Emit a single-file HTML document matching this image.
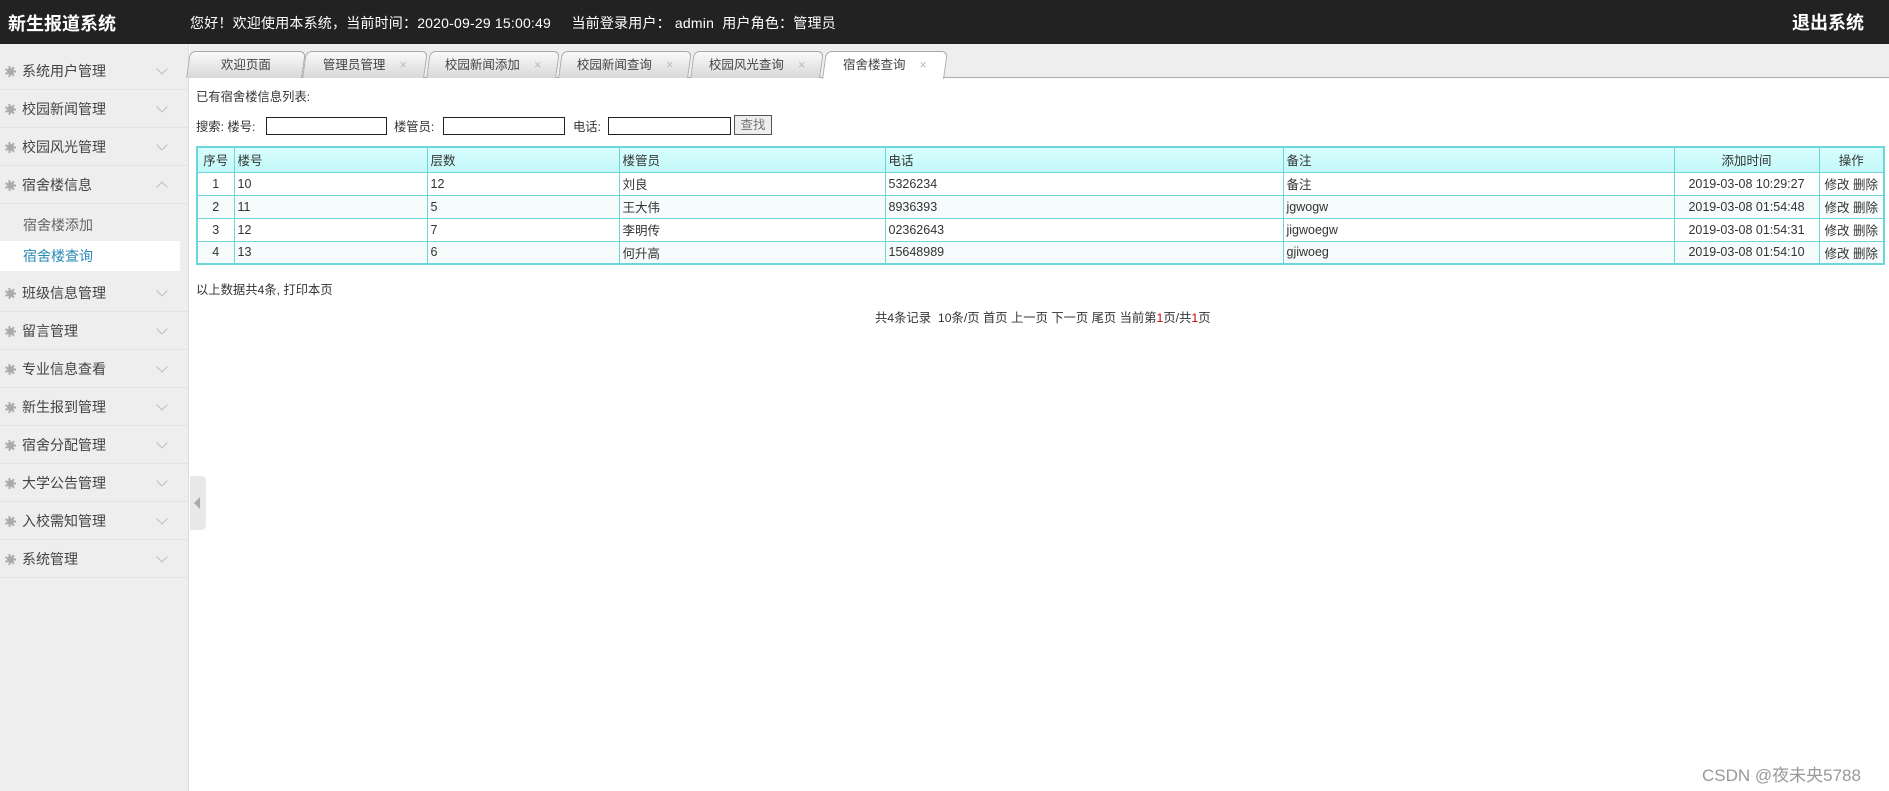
<!DOCTYPE html>
<html><head><meta charset="utf-8">
<style>
*{margin:0;padding:0;box-sizing:border-box}
body{width:1889px;height:791px;overflow:hidden;background:#fff;font-family:"Liberation Sans","Noto Sans CJK SC",sans-serif;font-size:13px;color:#333;position:relative}
.hd{position:absolute;left:0;top:0;width:1889px;height:44px;background:#222;color:#fff}
.hd .t{position:absolute;left:8px;top:10px;font-size:18px;font-weight:bold}
.hd .w{position:absolute;left:190px;top:13px;font-size:14px;letter-spacing:0.2px}
.hd .q{position:absolute;right:25px;top:9px;font-size:18px;font-weight:bold}
.sb{position:absolute;left:0;top:44px;width:189px;height:747px;background:#eee;border-right:1px solid #ddd}
.it{position:absolute;left:0;width:188px;height:38px;border-bottom:1px solid #e2e2e2;font-size:14px;color:#444;line-height:38px;padding-left:22px}
.it i{position:absolute;left:5px;top:14px;width:11px;height:11px;border-radius:50%;background:#aaa;border:2px dotted #eee}
.it b{position:absolute;right:22px;top:13px;width:8px;height:8px;border-right:1px solid #bbb;border-bottom:1px solid #bbb;transform:rotate(45deg)}
.it b.up{transform:rotate(-135deg);top:17px}
.sub{position:absolute;left:0;width:180px;height:30px;line-height:30px;padding-left:23px;font-size:14px;color:#666}
.tabs{position:absolute;left:190px;top:44px;width:1699px;height:34px;background:#eee;border-bottom:1px solid #aaa}
.tab{position:absolute;top:7px;height:27px;line-height:26px;text-align:center;font-size:12.5px;color:#444;background:linear-gradient(#fafafa,#d8d8d8);border:1px solid #aaa;border-bottom:none;border-radius:6px 6px 0 0;transform:skewX(-8deg)}
.tab span{display:inline-block;transform:skewX(8deg)}
.tab em{font-style:normal;color:#bbb;margin-left:14px}
.c{position:absolute;font-size:12.3px;color:#333;white-space:nowrap}
.inp{position:absolute;top:117px;height:18px;border:1px solid #222;background:#fff}
table{position:absolute;left:196px;top:146px;width:1689px;border-collapse:collapse;border:2px solid #6dd6da}
td{border:1px solid #6dd6da;height:23px;padding:0 3px;font-size:12.5px;white-space:nowrap}
tr.h td{background:linear-gradient(#d9fefe,#c4f8f8);height:25px}
tr:nth-child(odd):not(.h) td{background:#f6fbfb}
.ctr{text-align:center}
</style></head><body>
<div class="hd"><div class="t">新生报道系统</div><div class="w">您好！欢迎使用本系统，当前时间：2020-09-29 15:00:49 &nbsp;&nbsp;&nbsp; 当前登录用户： admin &nbsp;用户角色：管理员</div><div class="q">退出系统</div></div>
<div class="sb">
<div class="it" style="top:8px"><i></i>系统用户管理<b></b></div>
<div class="it" style="top:46px"><i></i>校园新闻管理<b></b></div>
<div class="it" style="top:84px"><i></i>校园风光管理<b></b></div>
<div class="it" style="top:122px"><i></i>宿舍楼信息<b class="up"></b></div>
<div class="sub" style="top:166px">宿舍楼添加</div>
<div class="sub" style="top:197px;background:#fff;color:#2a8ab8">宿舍楼查询</div>
<div class="it" style="top:230px"><i></i>班级信息管理<b></b></div>
<div class="it" style="top:268px"><i></i>留言管理<b></b></div>
<div class="it" style="top:306px"><i></i>专业信息查看<b></b></div>
<div class="it" style="top:344px"><i></i>新生报到管理<b></b></div>
<div class="it" style="top:382px"><i></i>宿舍分配管理<b></b></div>
<div class="it" style="top:420px"><i></i>大学公告管理<b></b></div>
<div class="it" style="top:458px"><i></i>入校需知管理<b></b></div>
<div class="it" style="top:496px"><i></i>系统管理<b></b></div>
</div>
<div style="position:absolute;left:190px;top:476px;width:16px;height:54px;background:#e8e8e8;border-radius:0 4px 4px 0"><div style="position:absolute;left:4px;top:21px;border-right:6px solid #aaa;border-top:6px solid transparent;border-bottom:6px solid transparent"></div></div>
<div class="tabs">
<div class="tab" style="left:-2px;width:116px"><span>欢迎页面</span></div>
<div class="tab" style="left:114px;width:122px"><span>管理员管理<em>×</em></span></div>
<div class="tab" style="left:238px;width:130px"><span>校园新闻添加<em>×</em></span></div>
<div class="tab" style="left:370px;width:130px"><span>校园新闻查询<em>×</em></span></div>
<div class="tab" style="left:502px;width:130px"><span>校园风光查询<em>×</em></span></div>
<div class="tab" style="left:634px;width:122px;background:#fff;height:28px"><span>宿舍楼查询<em>×</em></span></div>
</div>
<div class="c" style="left:196px;top:87px">已有宿舍楼信息列表:</div>
<div class="c" style="left:196px;top:117px">搜索: 楼号:</div>
<div class="inp" style="left:266px;width:121px"></div>
<div class="c" style="left:394px;top:117px">楼管员:</div>
<div class="inp" style="left:443px;width:122px"></div>
<div class="c" style="left:573px;top:117px">电话:</div>
<div class="inp" style="left:608px;width:123px"></div>
<div style="position:absolute;left:734px;top:115px;width:38px;height:20px;border:1px solid #555;background:#eee;font-size:12.5px;color:#777;text-align:center;line-height:18px">查找</div>
<table>
<tr class="h"><td class="ctr" style="width:37px">序号</td><td style="width:193px">楼号</td><td style="width:192px">层数</td><td style="width:266px">楼管员</td><td style="width:398px">电话</td><td style="width:391px">备注</td><td class="ctr" style="width:145px">添加时间</td><td class="ctr">操作</td></tr>
<tr><td class="ctr">1</td><td>10</td><td>12</td><td>刘良</td><td>5326234</td><td>备注</td><td class="ctr">2019-03-08 10:29:27</td><td class="ctr">修改 删除</td></tr>
<tr><td class="ctr">2</td><td>11</td><td>5</td><td>王大伟</td><td>8936393</td><td>jgwogw</td><td class="ctr">2019-03-08 01:54:48</td><td class="ctr">修改 删除</td></tr>
<tr><td class="ctr">3</td><td>12</td><td>7</td><td>李明传</td><td>02362643</td><td>jigwoegw</td><td class="ctr">2019-03-08 01:54:31</td><td class="ctr">修改 删除</td></tr>
<tr><td class="ctr">4</td><td>13</td><td>6</td><td>何升高</td><td>15648989</td><td>gjiwoeg</td><td class="ctr">2019-03-08 01:54:10</td><td class="ctr">修改 删除</td></tr>
</table>
<div class="c" style="left:196px;top:280px">以上数据共4条, 打印本页</div>
<div class="c" style="left:875px;top:308px">共4条记录 &nbsp;10条/页 首页 上一页 下一页 尾页 当前第<span style="color:#c00">1</span>页/共<span style="color:#c00">1</span>页</div>
<div class="c" style="left:1702px;top:761px;font-size:17px;color:#999">CSDN @夜未央5788</div>
</body></html>
